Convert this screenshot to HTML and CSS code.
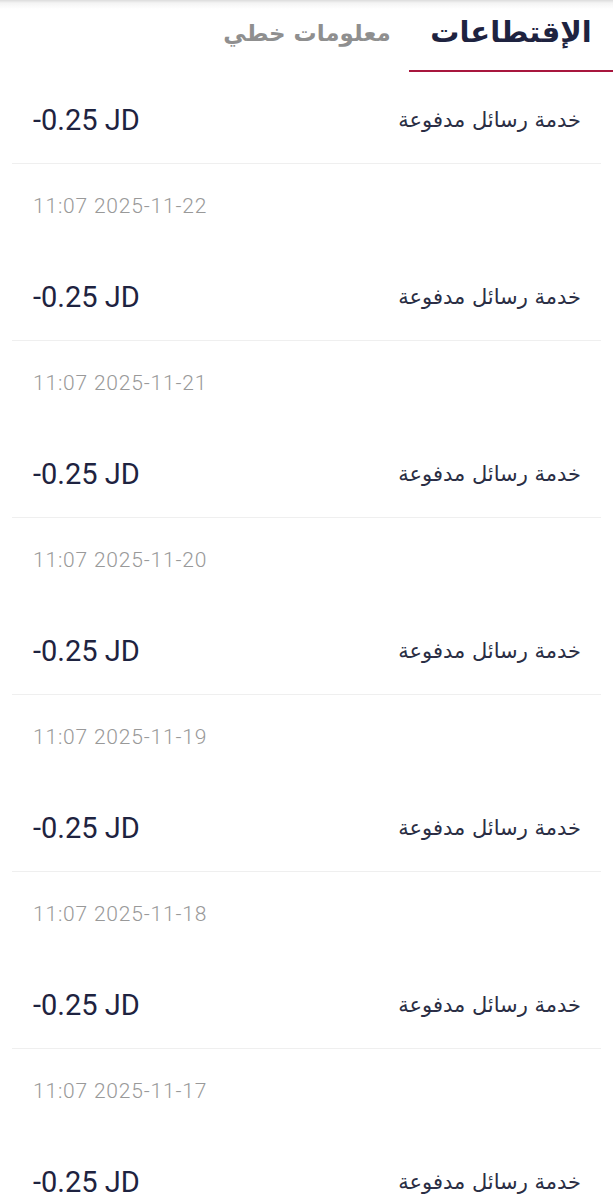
FILE: index.html
```html
<!DOCTYPE html>
<html lang="ar" dir="rtl">

<head>
    <meta charset="UTF-8">
    <meta name="viewport" content="width=device-width, initial-scale=1.0">
    <title>الإقتطاعات</title>
    <link rel="stylesheet" href="styles.css">
</head>

<body>
    <ul class="tab-menu">
        <li class="tab select">الإقتطاعات</li>
        <li class="tab">معلومات خطي</li>
    </ul>

    <ul class="deductions">
        <li class="item">
            <div class="row">
                <span class="title">خدمة رسائل مدفوعة</span>
                <span class="amount">-0.25 JD</span>
            </div>
            <div class="date">11:07 2025-11-22</div>
        </li>
        <li class="item">
            <div class="row">
                <span class="title">خدمة رسائل مدفوعة</span>
                <span class="amount">-0.25 JD</span>
            </div>
            <div class="date">11:07 2025-11-21</div>
        </li>
        <li class="item">
            <div class="row">
                <span class="title">خدمة رسائل مدفوعة</span>
                <span class="amount">-0.25 JD</span>
            </div>
            <div class="date">11:07 2025-11-20</div>
        </li>
        <li class="item">
            <div class="row">
                <span class="title">خدمة رسائل مدفوعة</span>
                <span class="amount">-0.25 JD</span>
            </div>
            <div class="date">11:07 2025-11-19</div>
        </li>
        <li class="item">
            <div class="row">
                <span class="title">خدمة رسائل مدفوعة</span>
                <span class="amount">-0.25 JD</span>
            </div>
            <div class="date">11:07 2025-11-18</div>
        </li>
        <li class="item">
            <div class="row">
                <span class="title">خدمة رسائل مدفوعة</span>
                <span class="amount">-0.25 JD</span>
            </div>
            <div class="date">11:07 2025-11-17</div>
        </li>
        <li class="item">
            <div class="row">
                <span class="title">خدمة رسائل مدفوعة</span>
                <span class="amount">-0.25 JD</span>
            </div>
            <div class="date">11:07 2025-11-16</div>
        </li>
    </ul>
</body>

</html>
```

FILE: styles.css
```css
body {
    margin: 0;
    background: #fff;
    font-family: "DejaVu Sans", "Noto Sans", sans-serif;
}

ul {
    margin: 0;
    padding: 0;
    list-style: none;
}

/* tabs */
.tab-menu {
    display: flex;
    height: 72px;
    background: linear-gradient(to bottom, #dcdcdc 0, #f4f4f4 3px, #fff 9px);
}

.tab-menu .tab {
    width: 204px;
    height: 72px;
    display: flex;
    align-items: center;
    justify-content: center;
    box-sizing: border-box;
    padding-bottom: 6px;
    font-size: 23px;
    font-weight: bold;
    color: #8f8f8f;
}

.tab-menu .tab.select {
    color: #1e2340;
    font-size: 29px;
    border-bottom: 2px solid #a8163e;
}

/* list */
.deductions {
    padding: 0 12px;
}

.item .row {
    display: flex;
    justify-content: space-between;
    align-items: center;
    height: 36px;
    padding: 30px 20px 25px 21px;
    border-bottom: 1px solid #efefef;
}

.item .title {
    font-size: 21px;
    color: #2a2e44;
}

.item .amount {
    direction: ltr;
    font-family: Roboto, "Liberation Sans", sans-serif;
    font-size: 29px;
    color: #1e2340;
}

.item .date {
    direction: ltr;
    text-align: left;
    height: 24px;
    line-height: 24px;
    padding: 30px 21px 31px;
    font-family: Roboto, "Liberation Sans", sans-serif;
    font-size: 21px;
    font-weight: 300;
    letter-spacing: 0.8px;
    color: #999;
}
```
